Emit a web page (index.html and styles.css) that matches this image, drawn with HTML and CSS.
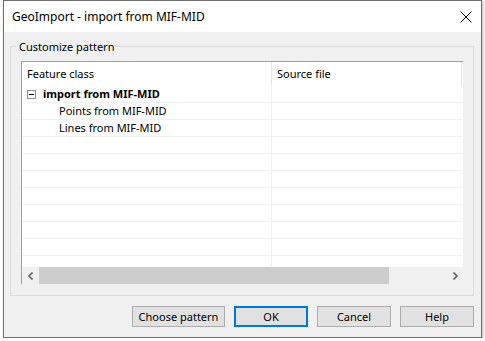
FILE: index.html
```html
<!DOCTYPE html>
<html>

<head>
  <meta charset="UTF-8">
  <title>GeoImport - import from MIF-MID</title>
  <link rel="stylesheet" href="styles.css">
</head>

<body>
  <div class="window">
    <div class="titlebar">
      <span class="title">GeoImport - import from MIF-MID</span>
      <svg class="close" width="12" height="12" viewBox="0 0 12 12">
        <path d="M0.5 0.5 L11.5 11.5 M11.5 0.5 L0.5 11.5" stroke="#000" stroke-width="1" fill="none" />
      </svg>
    </div>
    <div class="content">
      <fieldset class="group">
        <legend>Customize pattern</legend>
        <div class="list">
          <div class="list-head">
            <div class="hcell col1">Feature class</div>
            <div class="hcell col2">Source file</div>
          </div>
          <div class="row">
            <div class="cell col1"><span class="toggle"></span><b>import from MIF-MID</b></div>
            <div class="cell col2"></div>
          </div>
          <div class="row">
            <div class="cell col1 child">Points from MIF-MID</div>
            <div class="cell col2"></div>
          </div>
          <div class="row">
            <div class="cell col1 child">Lines from MIF-MID</div>
            <div class="cell col2"></div>
          </div>
          <div class="row"><div class="cell col1"></div><div class="cell col2"></div></div>
          <div class="row"><div class="cell col1"></div><div class="cell col2"></div></div>
          <div class="row"><div class="cell col1"></div><div class="cell col2"></div></div>
          <div class="row"><div class="cell col1"></div><div class="cell col2"></div></div>
          <div class="row"><div class="cell col1"></div><div class="cell col2"></div></div>
          <div class="row"><div class="cell col1"></div><div class="cell col2"></div></div>
          <div class="row"><div class="cell col1"></div><div class="cell col2"></div></div>
          <div class="row last"><div class="cell col1"></div><div class="cell col2"></div></div>
          <div class="hscroll">
            <div class="arrow">
              <svg width="8" height="8" viewBox="0 0 8 8"><path d="M5.5 0.5 L2 4 L5.5 7.5" stroke="#606060" stroke-width="1.6" fill="none" /></svg>
            </div>
            <div class="thumb"></div>
            <div class="track"></div>
            <div class="arrow">
              <svg width="8" height="8" viewBox="0 0 8 8"><path d="M2.5 0.5 L6 4 L2.5 7.5" stroke="#606060" stroke-width="1.6" fill="none" /></svg>
            </div>
          </div>
        </div>
      </fieldset>
      <div class="buttons">
        <button class="btn wide">Choose pattern</button>
        <button class="btn default">OK</button>
        <button class="btn">Cancel</button>
        <button class="btn">Help</button>
      </div>
    </div>
  </div>
</body>

</html>
```

FILE: styles.css
```css
body {
  margin: 0;
  background: #fff;
  font-family: "Noto Sans", "Liberation Sans", sans-serif;
  font-size: 11px;
  color: #000;
}

.window {
  margin-left: 3px;
  width: 477px;
  height: 336px;
  border: 1px solid #707070;
  background: #f0f0f0;
  box-shadow: 1px 1px 3px rgba(0, 0, 0, 0.3);
}

.titlebar {
  height: 31px;
  background: #fff;
  display: flex;
  align-items: center;
  justify-content: space-between;
  padding: 0 9px 0 8px;
}

.title {
  font-size: 12px;
}

.content {
  padding: 0 7px 0 6px;
}

.group {
  margin: 7px 0 0 0;
  padding: 7px 10px 11px 10px;
  border: 1px solid #dcdcdc;
  min-width: 0;
}

.group legend {
  padding: 0 2px;
  margin-left: -4px;
  line-height: 15px;
}

.list {
  width: 441px;
  background: #fff;
  border-top: 1px solid #a0a0a0;
  border-left: 1px solid #a0a0a0;
}

.list-head {
  display: flex;
  height: 24px;
}

.hcell {
  line-height: 24px;
  padding-left: 5px;
  box-sizing: border-box;
  border-right: 1px solid #e5e5e5;
}

.col1 {
  width: 250px;
  flex: none;
  box-sizing: border-box;
}

.col2 {
  width: 190px;
  flex: none;
  box-sizing: border-box;
}

.row {
  display: flex;
  height: 17px;
}

.cell {
  height: 17px;
  box-sizing: border-box;
  border-bottom: 1px solid #f0f0f0;
  line-height: 16px;
  padding-left: 5px;
  white-space: nowrap;
}

.cell.col1 {
  border-right: 1px solid #f0f0f0;
  display: flex;
  align-items: center;
}

.row.last {
  height: 11px;
}

.row.last .cell {
  height: 11px;
  border-bottom: none;
}

.child {
  padding-left: 37px;
}

.toggle {
  width: 7px;
  height: 7px;
  border: 1px solid #919191;
  margin-right: 7px;
  position: relative;
}

.toggle::after {
  content: "";
  position: absolute;
  left: 1px;
  top: 3px;
  width: 5px;
  height: 1px;
  background: #000;
}

.hscroll {
  display: flex;
  height: 17px;
  background: #f0f0f0;
}

.arrow {
  width: 17px;
  display: flex;
  align-items: center;
  justify-content: center;
}

.thumb {
  width: 350px;
  background: #cdcdcd;
}

.track {
  flex: 1;
}

.buttons {
  display: flex;
  justify-content: flex-end;
  gap: 9px;
  margin-top: 10px;
}

.btn {
  width: 74px;
  height: 21px;
  padding: 0;
  background: #e1e1e1;
  border: 1px solid #adadad;
  font-family: "Noto Sans", "Liberation Sans", sans-serif;
  font-size: 11px;
  color: #000;
}

.btn.wide {
  width: 93px;
}

.btn.default {
  border: 2px solid #0078d7;
}
```
